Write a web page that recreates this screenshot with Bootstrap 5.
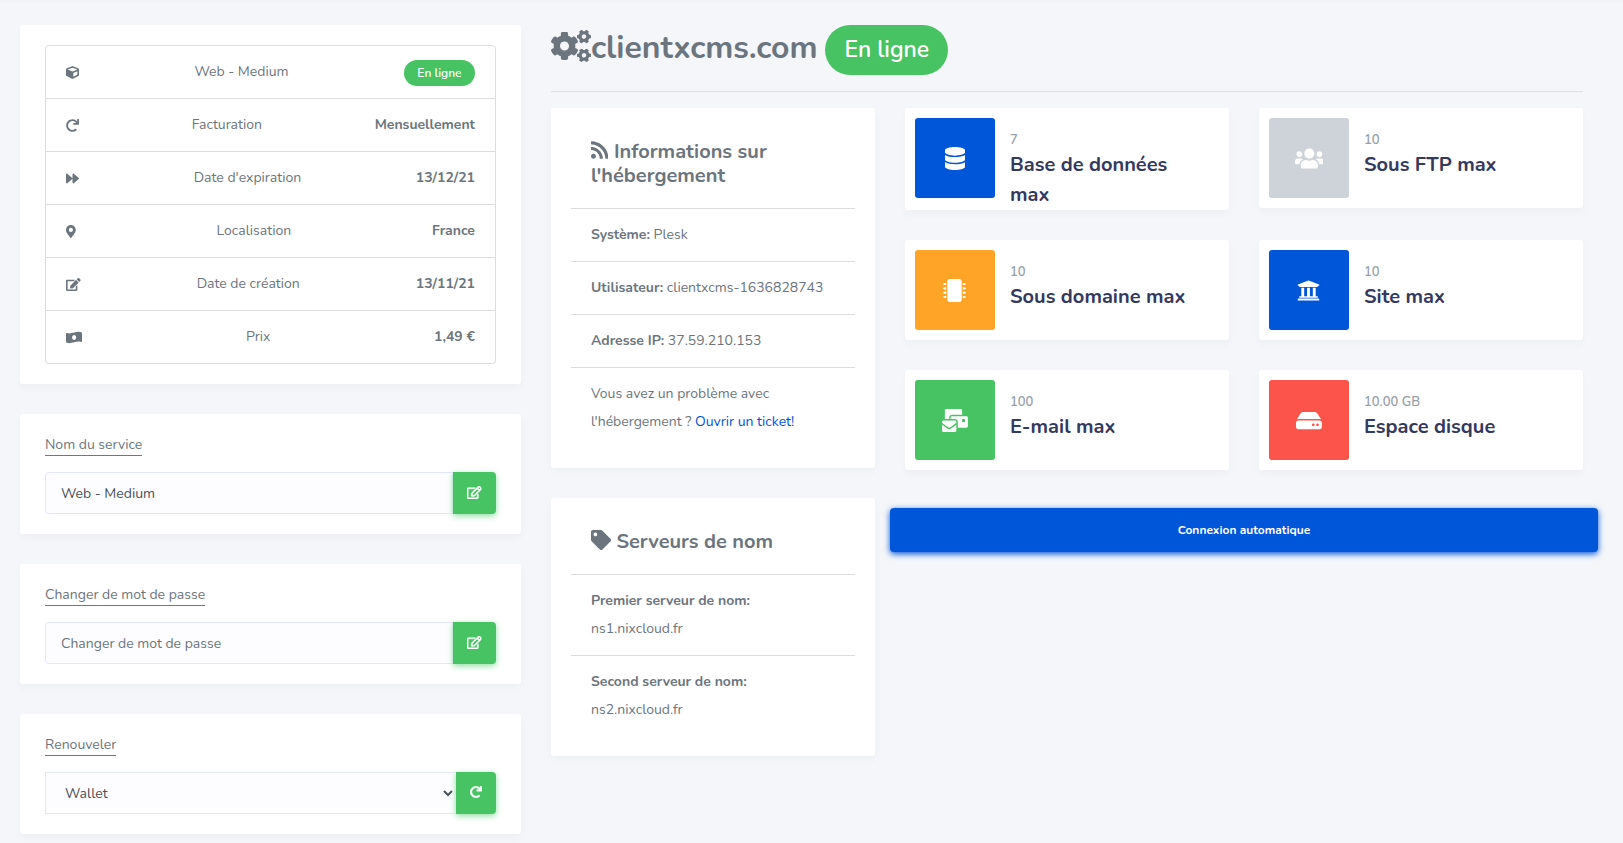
<!DOCTYPE html>
<html lang="fr">
<head>
<meta charset="utf-8">
<meta name="viewport" content="width=device-width, initial-scale=1">
<title>clientxcms.com</title>
<link href="https://cdn.jsdelivr.net/npm/bootstrap@5.3.0/dist/css/bootstrap.min.css" rel="stylesheet">
<style>
:root{--blue:#0056d9;--green:#47c363;--orange:#ffa426;--red:#fc544b;--grey:#cdd3d8;--line:#dcdddf}
body{background:#f4f6f9;color:#6c757d;font-family:Nunito,Lato,"Open Sans",sans-serif;font-size:14px;line-height:28px}
b,h1,h2,h3{font-weight:700}
a{color:var(--blue);text-decoration:none}
.page{padding:25px 25px 0 5px;background:linear-gradient(#eff1f4,#f4f6f9 4px)}
.page .row{--bs-gutter-x:30px;margin-left:0;margin-right:0}
.page .row .row{margin-left:-15px;margin-right:-15px}
.card{border:0;border-radius:3px;margin-bottom:30px;color:inherit;box-shadow:0 4px 8px rgba(0,0,0,.03)}
.card-body{padding:20px}
.card-side{padding:20px 25px}
.list-group{--bs-list-group-color:#6c757d;--bs-list-group-border-color:var(--line);--bs-list-group-item-padding-x:20px;--bs-list-group-item-padding-y:12px;--bs-list-group-border-radius:4px}
.icon{fill:currentColor;height:1em;width:auto;vertical-align:-2px}
.row-icon{font-size:13px;display:flex}
.status{background:var(--green);color:#fff;font-weight:600;border-radius:30px}
.status-sm{font-size:12px;line-height:12px;padding:7px 12px;margin-top:2px;min-width:71px;text-align:center}
.status-lg{font-size:23px;line-height:26px;padding:12px 19px}
.page-title{font-size:32px;line-height:50px;margin:0}
.page-title .icon{margin-top:5px}
.page-title .name{line-height:46px}
hr{margin:16px 0;border-color:#dcdee1;opacity:1}
.list-title{font-size:20px;line-height:24px;margin:0 0 8px}
.field-label{display:table;line-height:21px;border-bottom:1px solid #28a745;margin-bottom:16px}
.field{flex:1;min-width:0;height:42px;border:1px solid #e4e6fc;background:#fdfdff;color:#495057;padding:10px 15px;font-size:14px;line-height:20px;border-radius:4px 0 0 4px;outline:0}
.field::placeholder{color:#6c757d}
select.field{border-radius:0;border-right:0;padding-right:0}
.btn-field{background:var(--green);color:#fff;border:0;border-radius:0 4px 4px 0;height:42px;padding:0 14px 2px;font-size:13px;line-height:20px;box-shadow:0 2px 6px #8edfa4;display:flex;align-items:center}
.btn-field .icon{stroke:currentColor;stroke-width:18px;overflow:visible}
.btn-field.slim{font-size:12px}
.stat{display:flex;flex-direction:row;align-items:flex-start;min-height:100px}
.stat-icon{width:80px;height:80px;margin:10px;border-radius:3px;color:#fff;font-size:23px;display:flex;align-items:center;justify-content:center;flex:none}
.stat-text{padding:22px 25px 0 5px}
.stat-text h3{font-size:13px;line-height:20px;font-weight:600;color:#989fa9;margin:0}
.stat-text p{font-size:20px;line-height:30px;font-weight:700;color:#34395e;margin:0}
.btn-connect{background:var(--blue);color:#fff;border:0;border-radius:4px;width:100%;height:44px;margin-top:8px;font-size:12px;font-weight:700;line-height:24px;box-shadow:0 2px 6px var(--blue)}
</style>
</head>
<body>
<svg class="d-none" aria-hidden="true">
<symbol id="i-edit" viewBox="0 0 576 512"><path d="M402.3 344.9l32-32c5-5 13.7-1.5 13.7 5.7V464c0 26.5-21.5 48-48 48H48c-26.5 0-48-21.5-48-48V112c0-26.5 21.5-48 48-48h273.5c7.1 0 10.7 8.6 5.7 13.7l-32 32c-1.5 1.5-3.5 2.3-5.7 2.3H48v352h352V350.5c0-2.1.8-4.1 2.3-5.6zm156.6-201.8L296.3 405.7l-90.4 10c-26.2 2.9-48.5-19.2-45.6-45.6l10-90.4L432.9 17.1c22.9-22.9 59.9-22.9 82.7 0l43.2 43.2c22.9 22.9 22.9 60 .1 82.8zM460.1 174L402 115.9 216.2 301.8l-7.3 65.3 65.3-7.3L460.1 174zm64.8-79.7l-43.2-43.2c-4.1-4.1-10.8-4.1-14.8 0L436 82l58.1 58.1 30.9-30.9c4-4.2 4-10.8-.1-14.9z"/></symbol>
<symbol id="i-redo" viewBox="0 0 512 512"><path d="M500.33 0h-47.41a12 12 0 0 0-12 12.57l4 82.76A247.42 247.42 0 0 0 256 8C119.34 8 7.9 119.53 8 256.19 8.1 393.07 119.1 504 256 504a247.1 247.1 0 0 0 166.18-63.91 12 12 0 0 0 .48-17.43l-34-34a12 12 0 0 0-16.38-.55A176 176 0 1 1 402.1 157.8l-101.53-4.87a12 12 0 0 0-12.57 12v47.41a12 12 0 0 0 12 12h200.33a12 12 0 0 0 12-12V12a12 12 0 0 0-12-12z"/></symbol>
<symbol id="i-cog" viewBox="0 0 640 512"><path d="M512.1 191l-8.2 14.3c-3 5.3-9.4 7.5-15.1 5.4-11.8-4.4-22.6-10.7-32.1-18.6-4.6-3.8-5.8-10.5-2.8-15.7l8.2-14.3c-6.9-8-12.3-17.3-15.9-27.4h-16.5c-6 0-11.2-4.3-12.2-10.3-2-12-2.1-24.6 0-37.1 1-6 6.2-10.4 12.2-10.4h16.5c3.6-10.1 9-19.4 15.9-27.4l-8.2-14.3c-3-5.2-1.9-11.9 2.8-15.7 9.5-7.9 20.4-14.2 32.1-18.6 5.7-2.1 12.1.1 15.1 5.4l8.2 14.3c10.5-1.9 21.2-1.9 31.7 0L552 6.3c3-5.3 9.4-7.5 15.1-5.4 11.8 4.4 22.6 10.7 32.1 18.6 4.6 3.8 5.8 10.5 2.8 15.7l-8.2 14.3c6.9 8 12.3 17.3 15.9 27.4h16.5c6 0 11.2 4.3 12.2 10.3 2 12 2.1 24.6 0 37.1-1 6-6.2 10.4-12.2 10.4h-16.5c-3.6 10.1-9 19.4-15.9 27.4l8.2 14.3c3 5.2 1.9 11.9-2.8 15.7-9.5 7.9-20.4 14.2-32.1 18.6-5.7 2.1-12.1-.1-15.1-5.4l-8.2-14.3c-10.4 1.9-21.2 1.9-31.7 0zm-10.5-58.8c38.5 29.6 82.4-14.3 52.8-52.8-38.5-29.7-82.4 14.3-52.8 52.8z"/></symbol>
</svg>

<main class="page">
<div class="row">
  <div class="col-4">
    <section class="card"><div class="card-body card-side">
      <ul class="list-group">
        <li class="list-group-item d-flex justify-content-between"><span class="row-icon align-items-center"><svg class="icon" viewBox="0 0 512 512"><path d="M239.1 6.3l-208 78c-18.7 7-31.1 25-31.1 45v225.1c0 18.2 10.3 34.8 26.5 42.9l208 104c13.5 6.8 29.4 6.8 42.9 0l208-104c16.3-8.1 26.5-24.8 26.5-42.9V129.3c0-20-12.4-37.9-31.1-44.9l-208-78C262 2.2 250 2.2 239.1 6.3zM256 68.4l192 72v1.1l-192 78-192-78v-1.1l192-72zm32 356V275.5l160-65v133.9l-160 80z"/></svg></span><span>Web - Medium</span><span class="status status-sm">En ligne</span></li>
        <li class="list-group-item d-flex justify-content-between"><span class="row-icon align-items-center"><svg class="icon" viewBox="0 0 512 512"><use href="#i-redo"/></svg></span><span>Facturation</span><b>Mensuellement</b></li>
        <li class="list-group-item d-flex justify-content-between"><span class="row-icon align-items-center"><svg class="icon" viewBox="0 0 512 512"><path d="M500.5 231.4l-192-160C287.9 54.3 256 68.6 256 96v320c0 27.4 31.9 41.8 52.5 24.6l192-160c15.3-12.8 15.3-36.4 0-49.2zm-256 0l-192-160C31.9 54.3 0 68.6 0 96v320c0 27.4 31.9 41.8 52.5 24.6l192-160c15.3-12.8 15.3-36.4 0-49.2z"/></svg></span><span>Date d'expiration</span><b>13/12/21</b></li>
        <li class="list-group-item d-flex justify-content-between"><span class="row-icon align-items-center"><svg class="icon" viewBox="0 0 384 512"><path d="M172.268 501.67C26.97 291.031 0 269.413 0 192 0 85.961 85.961 0 192 0s192 85.961 192 192c0 77.413-26.97 99.031-172.268 309.67-9.535 13.774-29.93 13.773-39.464 0zM192 272c44.183 0 80-35.817 80-80s-35.817-80-80-80-80 35.817-80 80 35.817 80 80 80z"/></svg></span><span>Localisation</span><b>France</b></li>
        <li class="list-group-item d-flex justify-content-between"><span class="row-icon align-items-center"><svg class="icon" viewBox="0 0 576 512"><path d="M402.6 83.2l90.2 90.2c3.8 3.8 3.8 10 0 13.8L274.4 405.6l-92.8 10.3c-12.4 1.4-22.9-9.1-21.5-21.5l10.3-92.8L388.8 83.2c3.8-3.8 10-3.8 13.8 0zm162-22.9l-48.8-48.8c-15.2-15.2-39.9-15.2-55.2 0l-35.4 35.4c-3.8 3.8-3.8 10 0 13.8l90.2 90.2c3.8 3.8 10 3.8 13.8 0l35.4-35.4c15.2-15.3 15.2-40 0-55.2zM384 346.2V448H64V128h229.8c3.2 0 6.2-1.3 8.5-3.5l40-40c7.6-7.6 2.2-20.5-8.5-20.5H48C21.5 64 0 85.5 0 112v352c0 26.5 21.5 48 48 48h352c26.5 0 48-21.5 48-48V306.2c0-10.7-12.9-16-20.5-8.5l-40 40c-2.2 2.3-3.5 5.3-3.5 8.5z"/></svg></span><span>Date de création</span><b>13/11/21</b></li>
        <li class="list-group-item d-flex justify-content-between"><span class="row-icon align-items-center"><svg class="icon" viewBox="0 0 640 512"><path d="M621.16 54.46C582.37 38.19 543.55 32 504.75 32c-123.17-.01-246.33 62.34-369.5 62.34-30.89 0-61.76-3.92-92.65-13.72-3.47-1.1-6.95-1.62-10.35-1.62C15.04 79 0 92.32 0 110.81v317.26c0 12.63 7.23 24.6 18.84 29.46C57.63 473.81 96.45 480 135.25 480c123.17 0 246.34-62.35 369.51-62.35 30.89 0 61.76 3.92 92.65 13.72 3.47 1.1 6.95 1.62 10.35 1.62 17.21 0 32.25-13.32 32.25-31.81V83.93c-.01-12.64-7.24-24.6-18.85-29.47zM320 352c-44.19 0-80-42.99-80-96 0-53.02 35.82-96 80-96s80 42.98 80 96c0 53.03-35.83 96-80 96z"/></svg></span><span>Prix</span><b>1,49 €</b></li>
      </ul>
    </div></section>

    <section class="card"><form class="card-body card-side">
      <label class="field-label" for="service">Nom du service</label>
      <div class="d-flex"><input class="field" id="service" type="text" value="Web - Medium"><button class="btn btn-field" type="button" aria-label="Modifier le nom"><svg class="icon" viewBox="0 0 576 512"><use href="#i-edit"/></svg></button></div>
    </form></section>

    <section class="card"><form class="card-body card-side">
      <label class="field-label" for="passe">Changer de mot de passe</label>
      <div class="d-flex"><input class="field" id="passe" type="password" placeholder="Changer de mot de passe"><button class="btn btn-field" type="button" aria-label="Modifier le mot de passe"><svg class="icon" viewBox="0 0 576 512"><use href="#i-edit"/></svg></button></div>
    </form></section>

    <section class="card"><form class="card-body card-side">
      <label class="field-label" for="paiement">Renouveler</label>
      <div class="d-flex"><select class="field" id="paiement"><option>Wallet</option></select><button class="btn btn-field slim" type="button" aria-label="Renouveler"><svg class="icon" viewBox="0 0 512 512"><use href="#i-redo"/></svg></button></div>
    </form></section>
  </div>

  <div class="col-8">
    <h1 class="page-title d-flex align-items-start"><svg class="icon" viewBox="0 0 640 512"><use href="#i-cog"/><use href="#i-cog" y="299"/><path d="M386.3 286.1l33.7 16.8c10.1 5.8 14.5 18.1 10.5 29.1-8.9 24.2-26.4 46.4-42.6 65.8-7.4 8.9-20.2 11.1-30.3 5.3l-29.1-16.8c-16 13.7-34.6 24.6-54.9 31.7v33.6c0 11.6-8.3 21.6-19.7 23.6-24.6 4.2-50.4 4.4-75.9 0-11.5-2-20-11.9-20-23.6V418c-20.3-7.2-38.9-18-54.9-31.7L74 403c-10 5.8-22.9 3.6-30.3-5.3-16.2-19.4-33.3-41.6-42.2-65.7-4-10.9.4-23.2 10.5-29.1l33.3-16.8c-3.9-20.9-3.9-42.4 0-63.4L12 205.8c-10.1-5.8-14.6-18.1-10.5-29 8.9-24.2 26-46.4 42.2-65.8 7.4-8.9 20.2-11.1 30.3-5.3l29.1 16.8c16-13.7 34.6-24.6 54.9-31.7V57.1c0-11.5 8.2-21.5 19.6-23.5 24.6-4.2 50.5-4.4 76-.1 11.5 2 20 11.9 20 23.6v33.6c20.3 7.2 38.9 18 54.9 31.7l29.1-16.8c10-5.8 22.9-3.6 30.3 5.3 16.2 19.4 33.2 41.6 42.1 65.8 4 10.9.1 23.2-10 29.1l-33.7 16.8c3.9 21 3.9 42.5 0 63.5zm-117.6 21.1c59.2-77-28.7-164.9-105.7-105.7-59.2 77 28.7 164.9 105.7 105.7z"/></svg><span class="name me-2">clientxcms.com</span><span class="status status-lg">En ligne</span></h1>
    <hr>
    <div class="row">
      <div class="col-4">
        <section class="card"><div class="card-body">
          <ul class="list-group list-group-flush">
            <li class="list-group-item"><h2 class="list-title"><svg class="icon" viewBox="0 0 448 512"><path d="M128.081 415.959c0 35.369-28.672 64.041-64.041 64.041S0 451.328 0 415.959s28.672-64.041 64.041-64.041 64.04 28.673 64.04 64.041zm175.66 47.25c-8.354-154.6-132.185-278.587-286.95-286.95C7.656 175.765 0 183.105 0 192.253v48.069c0 8.415 6.49 15.472 14.887 16.018 111.832 7.284 201.473 96.702 208.772 208.772.547 8.397 7.604 14.887 16.018 14.887h48.069c9.149.001 16.489-7.655 15.995-16.79zm144.249.288C439.596 229.677 251.465 40.445 16.503 32.01 7.473 31.686 0 38.981 0 48.016v48.068c0 8.625 6.835 15.645 15.453 15.999 191.179 7.839 344.627 161.316 352.465 352.465.353 8.618 7.373 15.453 15.999 15.453h48.068c9.034-.001 16.329-7.474 16.005-16.504z"/></svg> Informations sur l'hébergement</h2></li>
            <li class="list-group-item"><b>Système:</b> Plesk</li>
            <li class="list-group-item"><b>Utilisateur:</b> clientxcms-1636828743</li>
            <li class="list-group-item"><b>Adresse IP:</b> 37.59.210.153</li>
            <li class="list-group-item">Vous avez un problème avec l'hébergement ? <a href="#">Ouvrir un ticket!</a></li>
          </ul>
        </div></section>
        <section class="card"><div class="card-body">
          <ul class="list-group list-group-flush">
            <li class="list-group-item"><h2 class="list-title"><svg class="icon" viewBox="0 0 512 512"><path d="M0 252.118V48C0 21.49 21.49 0 48 0h204.118a48 48 0 0 1 33.941 14.059l211.882 211.882c18.745 18.745 18.745 49.137 0 67.882L293.823 497.941c-18.745 18.745-49.137 18.745-67.882 0L14.059 286.059A48 48 0 0 1 0 252.118zM112 64c-26.51 0-48 21.49-48 48s21.49 48 48 48 48-21.49 48-48-21.49-48-48-48z"/></svg> Serveurs de nom</h2></li>
            <li class="list-group-item"><b>Premier serveur de nom:</b><br>ns1.nixcloud.fr</li>
            <li class="list-group-item"><b>Second serveur de nom:</b><br>ns2.nixcloud.fr</li>
          </ul>
        </div></section>
      </div>
      <div class="col-8">
        <div class="row">
          <div class="col-6"><article class="card stat"><div class="stat-icon" style="background:var(--blue)"><svg class="icon" viewBox="0 0 448 512"><path d="M448 73.143v45.714C448 159.143 347.667 192 224 192S0 159.143 0 118.857V73.143C0 32.857 100.333 0 224 0s224 32.857 224 73.143zM448 176v102.857C448 319.143 347.667 352 224 352S0 319.143 0 278.857V176c48.125 33.143 136.208 48.572 224 48.572S399.874 209.143 448 176zm0 160v102.857C448 479.143 347.667 512 224 512S0 479.143 0 438.857V336c48.125 33.143 136.208 48.572 224 48.572S399.874 369.143 448 336z"/></svg></div><div class="stat-text"><h3>7</h3><p>Base de données max</p></div></article></div>
          <div class="col-6"><article class="card stat"><div class="stat-icon" style="background:var(--grey)"><svg class="icon" viewBox="0 0 640 512"><path d="M96 224c35.3 0 64-28.7 64-64s-28.7-64-64-64-64 28.7-64 64 28.7 64 64 64zm448 0c35.3 0 64-28.7 64-64s-28.7-64-64-64-64 28.7-64 64 28.7 64 64 64zm32 32h-64c-17.6 0-33.5 7.1-45.1 18.6 40.3 22.1 68.9 62 75.1 109.4h66c17.7 0 32-14.3 32-32v-32c0-35.3-28.7-64-64-64zm-256 0c61.9 0 112-50.1 112-112S381.9 32 320 32 208 82.1 208 144s50.1 112 112 112zm76.8 32h-8.3c-20.8 10-43.9 16-68.5 16s-47.6-6-68.5-16h-8.3C179.6 288 128 339.6 128 403.2V432c0 26.5 21.5 48 48 48h288c26.5 0 48-21.5 48-48v-28.8c0-63.6-51.6-115.2-115.2-115.2zm-223.7-13.4C161.5 263.1 145.6 256 128 256H64c-35.3 0-64 28.7-64 64v32c0 17.7 14.3 32 32 32h65.9c6.3-47.4 34.9-87.3 75.2-109.4z"/></svg></div><div class="stat-text"><h3>10</h3><p>Sous FTP max</p></div></article></div>
          <div class="col-6"><article class="card stat"><div class="stat-icon" style="background:var(--orange)"><svg class="icon" viewBox="0 0 512 512"><defs><path id="pins" d="M512 106v12a6 6 0 0 1-6 6h-18v6a6 6 0 0 1-6 6h-42V88h42a6 6 0 0 1 6 6v6h18a6 6 0 0 1 6 6zM0 106v12a6 6 0 0 0 6 6h18v6a6 6 0 0 0 6 6h42V88H30a6 6 0 0 0-6 6v6H6a6 6 0 0 0-6 6z"/></defs><path d="M416 48v416c0 26.51-21.49 48-48 48H144c-26.51 0-48-21.49-48-48V48c0-26.51 21.49-48 48-48h224c26.51 0 48 21.49 48 48z"/><use href="#pins"/><use href="#pins" y="96"/><use href="#pins" y="192"/><use href="#pins" y="288"/></svg></div><div class="stat-text"><h3>10</h3><p>Sous domaine max</p></div></article></div>
          <div class="col-6"><article class="card stat"><div class="stat-icon" style="background:var(--blue)"><svg class="icon" viewBox="0 0 512 512"><path d="M496 128v16a8 8 0 0 1-8 8h-24v12c0 6.627-5.373 12-12 12H60c-6.627 0-12-5.373-12-12v-12H24a8 8 0 0 1-8-8v-16a8 8 0 0 1 4.941-7.392l232-88a7.996 7.996 0 0 1 6.118 0l232 88A8 8 0 0 1 496 128zm-24 304H40c-13.255 0-24 10.745-24 24v16a8 8 0 0 0 8 8h464a8 8 0 0 0 8-8v-16c0-13.255-10.745-24-24-24zM96 192v192H60c-6.627 0-12 5.373-12 12v20h416v-20c0-6.627-5.373-12-12-12h-36V192h-64v192h-64V192h-64v192h-64V192H96z"/></svg></div><div class="stat-text"><h3>10</h3><p>Site max</p></div></article></div>
          <div class="col-6"><article class="card stat"><div class="stat-icon" style="background:var(--green)"><svg class="icon" viewBox="0 0 576 512"><path d="M160 448c-25.6 0-51.2-22.4-64-32-64-44.8-83.2-60.8-96-70.4V480c0 17.67 14.33 32 32 32h256c17.67 0 32-14.33 32-32V345.6c-12.8 9.6-32 25.6-96 70.4-12.8 9.6-38.4 32-64 32zm128-192H32c-17.67 0-32 14.33-32 32v16c25.6 19.2 22.4 19.2 115.2 86.4 9.6 6.4 28.8 25.6 44.8 25.6s35.2-19.2 44.8-22.4c92.8-67.2 89.6-67.2 115.2-86.4V288c0-17.67-14.33-32-32-32zm256-96H224c-17.67 0-32 14.33-32 32v32h96c33.21 0 60.59 25.42 63.71 57.82l.29-.22V416h192c17.67 0 32-14.33 32-32V192c0-17.67-14.33-32-32-32zm-32 128h-64v-64h64v64zm-352-96c0-35.29 28.71-64 64-64h224V32c0-17.67-14.33-32-32-32H96C78.33 0 64 14.33 64 32v192h96v-32z"/></svg></div><div class="stat-text"><h3>100</h3><p>E-mail max</p></div></article></div>
          <div class="col-6"><article class="card stat"><div class="stat-icon" style="background:var(--red)"><svg class="icon" viewBox="0 0 576 512"><path d="M576 304v96c0 26.51-21.49 48-48 48H48c-26.51 0-48-21.49-48-48v-96c0-26.51 21.49-48 48-48h480c26.51 0 48 21.49 48 48zm-48-80a79.557 79.557 0 0 1 30.777 6.165L462.25 85.374A48.003 48.003 0 0 0 422.311 64H153.689a48 48 0 0 0-39.938 21.374L17.223 230.165A79.557 79.557 0 0 1 48 224h480zm-48 96c-17.673 0-32 14.327-32 32s14.327 32 32 32 32-14.327 32-32-14.327-32-32-32zm-96 0c-17.673 0-32 14.327-32 32s14.327 32 32 32 32-14.327 32-32-14.327-32-32-32z"/></svg></div><div class="stat-text"><h3>10.00 GB</h3><p>Espace disque</p></div></article></div>
          <button class="btn-connect" type="button">Connexion automatique</button>
        </div>
      </div>
    </div>
  </div>
</div>
</main>
<script src="https://cdn.jsdelivr.net/npm/bootstrap@5.3.0/dist/js/bootstrap.bundle.min.js"></script>
</body>
</html>
